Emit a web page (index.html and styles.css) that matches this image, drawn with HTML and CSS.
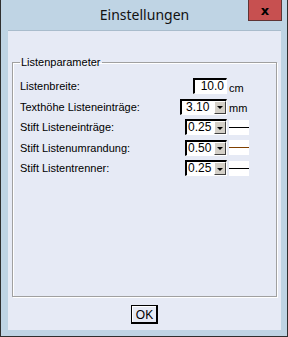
FILE: index.html
```html
<!DOCTYPE html>
<html lang="de">
<head>
    <meta charset="UTF-8">
    <meta name="viewport" content="width=device-width, initial-scale=1.0">
    <title>Einstellungen</title>
    <link rel="stylesheet" href="styles.css">
</head>
<body>

    <div class="window">
        <div class="titlebar">
            <span class="title">Einstellungen</span>
            <button class="close">x</button>
        </div>

        <div class="client">
            <fieldset class="group">
                <legend>Listenparameter</legend>

                <div class="rows">
                    <label>Listenbreite:</label>
                    <span class="edit">10.0</span>
                    <span class="unit">cm</span>

                    <label>Texthöhe Listeneinträge:</label>
                    <span class="combo wide"><span class="value">3.10</span><span class="drop"></span></span>
                    <span class="unit">mm</span>

                    <label>Stift Listeneinträge:</label>
                    <span class="combo"><span class="value">0.25</span><span class="drop"></span></span>
                    <span class="pen"><span class="stroke"></span></span>

                    <label>Stift Listenumrandung:</label>
                    <span class="combo"><span class="value">0.50</span><span class="drop"></span></span>
                    <span class="pen"><span class="stroke brown"></span></span>

                    <label>Stift Listentrenner:</label>
                    <span class="combo"><span class="value">0.25</span><span class="drop"></span></span>
                    <span class="pen"><span class="stroke"></span></span>
                </div>
            </fieldset>

            <div class="actions">
                <button class="ok">OK</button>
            </div>
        </div>
    </div>

</body>
</html>
```

FILE: styles.css
```css
body {
    margin: 0;
    font-family: "Liberation Sans", Arial, sans-serif;
    font-size: 11px;
    color: #000;
}
.window {
    width: 288px;
    height: 337px;
    box-sizing: border-box;
    background-color: #bfd4e4;
    border: 1px solid #2f2f2f;
    border-top: none;
    padding: 0 6px 6px 7px;
    display: flex;
    flex-direction: column;
}
.titlebar {
    position: relative;
    height: 30px;
    display: flex;
    align-items: center;
    justify-content: center;
}
.title {
    font-family: "Noto Sans", "Open Sans", sans-serif;
    font-size: 14px;
    margin-top: -1px;
    color: #111;
}
.close {
    position: absolute;
    top: 0;
    right: -1px;
    width: 34px;
    height: 21px;
    padding: 0;
    background-color: #c75050;
    border: 1px solid #5e3434;
    border-top: none;
    font-family: "DejaVu Sans", sans-serif;
    font-weight: bold;
    font-size: 13px;
    line-height: 13px;
    color: #000;
}
.client {
    flex: 1;
    background-color: #e6eaf5;
    border-top: 1px solid #a9bccc;
    display: flex;
    flex-direction: column;
    padding: 25px 4px 0 4px;
}
.group {
    flex: 1;
    margin: 0;
    padding: 7px 6px 0 7px;
    border: 1px solid #a0a0a0;
    box-shadow: inset 1px 1px 0 #fff, 1px 1px 0 #fff;
}
.group legend {
    padding: 0 1px;
    margin-left: 0;
    line-height: 13px;
}
.rows {
    display: grid;
    grid-template-columns: 159px 48px auto;
    grid-auto-rows: 20.5px;
    align-items: center;
}
.edit, .combo {
    justify-self: end;
    height: 16px;
    box-sizing: border-box;
    background-color: #fff;
    border-style: solid;
    border-width: 2px 1px 1px 2px;
    border-color: #000 #fff #fff #000;
    font-size: 12px;
    line-height: 13px;
}
.edit {
    width: 34px;
    text-align: right;
    padding-right: 2px;
}
.combo {
    width: 42px;
    display: flex;
}
.combo.wide {
    width: 47px;
}
.combo .value {
    flex: 1;
    padding-left: 1px;
}
.combo.wide .value {
    padding-left: 4px;
}
.drop {
    width: 12px;
    height: 13px;
    box-sizing: border-box;
    background-color: #d4d0c8;
    border-style: solid;
    border-width: 1px;
    border-color: #fff #404040 #404040 #fff;
    display: flex;
    align-items: center;
    justify-content: center;
}
.drop::after {
    content: "";
    border-left: 3px solid transparent;
    border-right: 3px solid transparent;
    border-top: 3px solid #000;
    margin-top: 1px;
}
.unit {
    padding-left: 2px;
    padding-top: 3px;
}
.pen {
    width: 20px;
    height: 15px;
    margin-left: 2px;
    background-color: #fff;
    display: flex;
    align-items: center;
}
.stroke {
    width: 100%;
    height: 1px;
    background-color: #000;
}
.stroke.brown {
    background-color: #804000;
}
.actions {
    height: 33px;
    display: flex;
    justify-content: center;
    align-items: flex-start;
    padding-top: 8px;
    box-sizing: border-box;
}
.ok {
    width: 27px;
    height: 19px;
    padding: 0;
    background-color: #e6eaf5;
    border: 1px solid #000;
    box-shadow: inset -1px -1px 0 #000, inset 1px 1px 0 #fff;
    font-family: "Liberation Sans", Arial, sans-serif;
    font-size: 12px;
    color: #000;
}
```
